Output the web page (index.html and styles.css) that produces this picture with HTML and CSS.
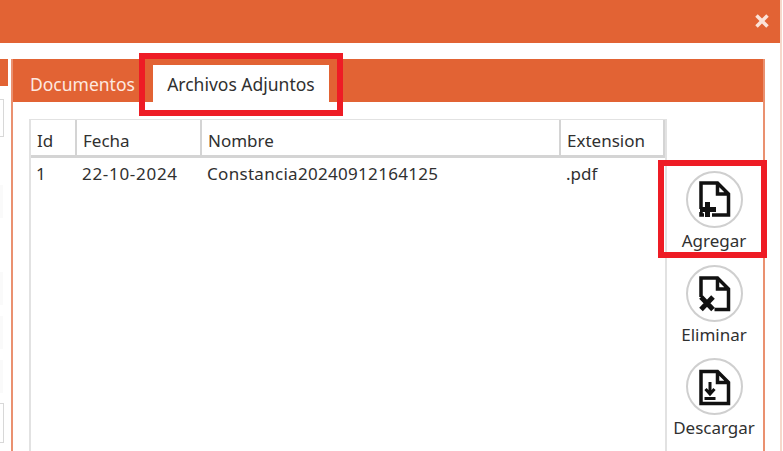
FILE: index.html
```html
<!DOCTYPE html>
<html lang="es">
<head>
<meta charset="utf-8">
<title>Archivos Adjuntos</title>
<link rel="stylesheet" href="styles.css">
</head>
<body>
<div class="window">
  <header class="titlebar">
    <svg class="close" viewBox="0 0 14 14" width="14" height="14"><path d="M1.500 1.500L12.500 12.500M12.500 1.500L1.500 12.500"/></svg>
  </header>
  <div class="content">
    <aside class="side">
      <div class="side-tab"></div>
      <div class="field bordered first"></div>
      <div class="field f2"></div>
      <div class="field f3"></div>
      <div class="field f4"></div>
      <div class="field f4"></div>
      <div class="field bordered last"></div>
    </aside>
    <section class="panel">
      <nav class="tabs">
        <div class="tab">Documentos</div>
        <div class="tab active">Archivos Adjuntos</div>
      </nav>
      <div class="tab-body">
        <div class="grid">
          <div class="row head">
            <div class="c c-id">Id</div>
            <div class="c c-date">Fecha</div>
            <div class="c c-name">Nombre</div>
            <div class="c c-ext">Extension</div>
          </div>
          <div class="row data">
            <div class="c c-id">1</div>
            <div class="c c-date">22-10-2024</div>
            <div class="c c-name">Constancia20240912164125</div>
            <div class="c c-ext">.pdf</div>
          </div>
        </div>
        <div class="actions">
          <button class="action">
            <svg class="ico" viewBox="0 0 57 57" width="57" height="57">
              <circle class="ring" cx="28.5" cy="28.5" r="27.5"/>
              <path class="doc" d="M15 38V12H31.500L42.500 23V44H26M31.500 12V23H42.500M15 41V44H18"/>
              <path class="mark" d="M14 38.500H30M21.500 31V46"/>
            </svg>
            <span>Agregar</span>
          </button>
          <button class="action">
            <svg class="ico" viewBox="0 0 57 57" width="57" height="57">
              <circle class="ring" cx="28.5" cy="28.5" r="27.500"/>
              <path class="doc" d="M15 32V13H31.500L42.500 24V44.500H28.500M31.500 13V24H42.500"/>
              <path class="mark" d="M15 32L27 44.500M27 32L15 44.500"/>
            </svg>
            <span>Eliminar</span>
          </button>
          <button class="action">
            <svg class="ico" viewBox="0 0 57 57" width="57" height="57">
              <circle class="ring" cx="28.500" cy="28.500" r="27.500"/>
              <path class="doc" d="M15 13.500H31.500L42.500 24.500V45.500H15ZM31.500 13.500V24.500H42.500"/>
              <path class="thin" d="M24 24V36M19.500 31L24 36L28.500 31M18.500 40.500H29.500"/>
            </svg>
            <span>Descargar</span>
          </button>
        </div>
      </div>
    </section>
  </div>
</div>
<div class="mark-box mark-tab"></div>
<div class="mark-box mark-add"></div>
</body>
</html>
```

FILE: styles.css
```css
* { box-sizing: border-box; }
html, body { margin: 0; height: 100%; }
body {
  width: 783px;
  height: 451px;
  overflow: hidden;
  position: relative;
  background: #fff;
  font-family: "Noto Sans", "Open Sans", sans-serif;
  color: #303030;
}
.window {
  width: 782px;
  height: 451px;
  border-right: 2px solid #f6d8cb;
  display: flex;
  flex-direction: column;
}
.titlebar {
  height: 43px;
  flex: none;
  background: #e26334;
  display: flex;
  justify-content: flex-end;
  align-items: center;
  padding: 0 11px 2px 0;
}
.close { fill: none; stroke: #fbe3d9; stroke-width: 3.5; display: block; }
.content {
  flex: 1;
  display: flex;
  padding-top: 16px;
  min-height: 0;
}
.side {
  width: 11px;
  flex: none;
  display: flex;
  flex-direction: column;
}
.side-tab {
  width: 8px;
  height: 27px;
  background: #e26334;
  flex: none;
}
.field { width: 3px; flex: none; background: #fafafa; height: 33px; }
.field.bordered {
  width: 4px;
  background: #fff;
  border: 1.500px solid #d8d8d8;
  border-left: 0;
}
.first { height: 38px; margin-top: 13px; }
.f2 { margin-top: 48px; }
.f3 { margin-top: 54px; }
.f4 { margin-top: 11px; }
.last { height: 40px; margin-top: 10px; }
.panel {
  width: 754px;
  flex: none;
  border-left: 2px solid #ea9170;
  border-right: 2px solid #ea9170;
  display: flex;
  flex-direction: column;
}
.tabs {
  height: 43px;
  flex: none;
  background: #e26334;
  display: flex;
  align-items: flex-end;
  padding-left: 5px;
  font-size: 17.5px;
}
.tab {
  color: #fde9e0;
  height: 37px;
  padding: 6px 18px 0 12px;
  line-height: 26px;
}
.tab.active {
  background: #fff;
  color: #303030;
  width: 176px;
  padding: 6px 0 0;
  text-align: center;
}
.tab-body {
  flex: 1;
  display: flex;
  padding: 17px 0 0 16px;
  min-height: 0;
}
.grid {
  width: 638px;
  flex: none;
  border: solid #e2e2e2;
  border-width: 1px 2px 0 2px;
  font-size: 17px;
}
.row { display: flex; }
.head {
  height: 38px;
  border-bottom: 3px solid #d4d4d4;
  align-items: center;
}
.head .c {
  height: 100%;
  border-right: 2px solid #d4d4d4;
  padding-left: 6px;
  line-height: 42px;
}
.data { height: 40px; line-height: 32px; }
.data .c { padding-left: 5px; }
.data .c-date { letter-spacing: 0.7px; }
.data .c-name { letter-spacing: 0.3px; }
.c-id { width: 46px; }
.c-date { width: 125px; }
.c-name { width: 359px; }
.c-ext { width: 104px; }
.actions {
  flex: 1;
  display: flex;
  flex-direction: column;
  align-items: center;
  padding: 52px 0 0 0;
  margin-left: -2px;
  gap: 1px;
}
.action {
  border: 0;
  background: none;
  padding: 0;
  margin: 0;
  font: inherit;
  font-size: 17px;
  color: #303030;
  display: flex;
  flex-direction: column;
  align-items: center;
  height: 93px;
  width: 96px;
}
.action span { line-height: 24px; height: 24px; margin-top: 1px; }
.ico { display: block; flex: none; }
.ring { fill: #fff; stroke: #cfcfcf; stroke-width: 2; }
.doc { fill: none; stroke: #111; stroke-width: 3.5; stroke-linejoin: miter; }
.mark { fill: none; stroke: #111; stroke-width: 5; }
.thin { fill: none; stroke: #111; stroke-width: 3; }
.mark-box {
  position: absolute;
  border: 6px solid #ee1c25;
  pointer-events: none;
}
.mark-tab { left: 139px; top: 53px; width: 204px; height: 63px; }
.mark-add { left: 658px; top: 160px; width: 109px; height: 98px; }
```
